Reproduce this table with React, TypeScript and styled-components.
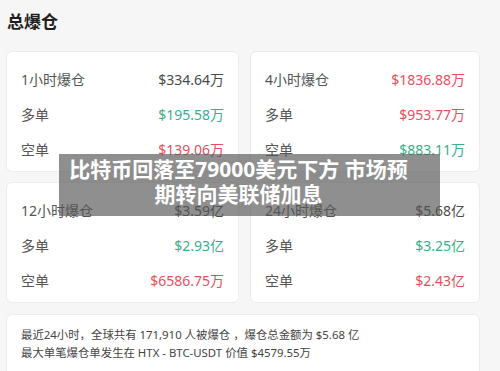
import styled, { createGlobalStyle } from 'styled-components'

type TTone = 'plain' | 'long' | 'short'

type TRow = {
  label: string,
  value: string,
  tone: TTone
}

type TCard = {
  id: string,
  rows: TRow[]
}

const cards: TCard[] = [
  {
    id: '1h',
    rows: [
      { label: '1小时爆仓', value: '$334.64万', tone: 'plain' },
      { label: '多单', value: '$195.58万', tone: 'long' },
      { label: '空单', value: '$139.06万', tone: 'short' }
    ]
  },
  {
    id: '4h',
    rows: [
      { label: '4小时爆仓', value: '$1836.88万', tone: 'short' },
      { label: '多单', value: '$953.77万', tone: 'short' },
      { label: '空单', value: '$883.11万', tone: 'long' }
    ]
  },
  {
    id: '12h',
    rows: [
      { label: '12小时爆仓', value: '$3.59亿', tone: 'plain' },
      { label: '多单', value: '$2.93亿', tone: 'long' },
      { label: '空单', value: '$6586.75万', tone: 'short' }
    ]
  },
  {
    id: '24h',
    rows: [
      { label: '24小时爆仓', value: '$5.68亿', tone: 'plain' },
      { label: '多单', value: '$3.25亿', tone: 'long' },
      { label: '空单', value: '$2.43亿', tone: 'short' }
    ]
  }
]

const toneColors: Record<TTone, string> = {
  plain: '#4a4a4a',
  long: '#3aae8c',
  short: '#e5505c'
}

export default function App() {
  return (
    <>
      <GlobalStyle />
      <Page>
        <Title>总爆仓</Title>
        <CardGrid>
          {cards.map(card =>
            <Card key={card.id}>
              {card.rows.map(row =>
                <Row key={row.label}>
                  <Label>{row.label}</Label>
                  <Value $tone={row.tone}>{row.value}</Value>
                </Row>
              )}
            </Card>
          )}
        </CardGrid>
        <SummaryCard>
          <SummaryLine>最近24小时，全球共有 171,910 人被爆仓 ，爆仓总金额为 $5.68 亿</SummaryLine>
          <SummaryLine>最大单笔爆仓单发生在 HTX - BTC-USDT 价值 $4579.55万</SummaryLine>
        </SummaryCard>
        <Headline>
          <HeadlineLine>比特币回落至79000美元下方 市场预</HeadlineLine>
          <HeadlineLine>期转向美联储加息</HeadlineLine>
        </Headline>
      </Page>
    </>
  )
}

const GlobalStyle = createGlobalStyle`
  html, body {
    margin: 0;
    padding: 0;
    background: #f6f6f6;
    font-family: "Noto Sans", "Noto Sans CJK SC", sans-serif;
  }
`

const Page = styled.div`
  position: relative;
  width: 500px;
  height: 371px;
  overflow: hidden;
  box-sizing: border-box;
  padding: 9px 20px 0 6px;
  background: #f6f6f6;
`

const Title = styled.h1`
  margin: 0 0 0 1px;
  height: 26px;
  line-height: 26px;
  font-size: 17px;
  font-weight: 700;
  color: #1f1f1f;
`

const CardGrid = styled.div`
  display: grid;
  grid-template-columns: 233px 230px;
  column-gap: 11px;
  row-gap: 10px;
  margin-top: 16px;
`

const Card = styled.div`
  display: flex;
  flex-direction: column;
  box-sizing: border-box;
  height: 121px;
  padding: 9px 14px 5px;
  background: #fff;
  border: 1px solid #ececec;
  border-radius: 6px;
`

const Row = styled.div`
  display: flex;
  justify-content: space-between;
  align-items: center;
  height: 35px;
`

const Label = styled.span`
  font-size: 14px;
  color: #555;
`

const Value = styled.span<{ $tone: TTone }>`
  font-size: 14px;
  color: ${p => toneColors[p.$tone]};
`

const SummaryCard = styled.div`
  box-sizing: border-box;
  width: 474px;
  margin-top: 11px;
  padding: 11px 14px 20px;
  background: #fff;
  border: 1px solid #ececec;
  border-radius: 6px;
`

const SummaryLine = styled.div`
  font-size: 11.4px;
  line-height: 18px;
  color: #444;
  white-space: nowrap;
`

const Headline = styled.div`
  position: absolute;
  left: 59px;
  top: 154px;
  width: 381px;
  height: 62px;
  box-sizing: border-box;
  padding: 3px 22px 0 0;
  display: flex;
  flex-direction: column;
  align-items: center;
  background: rgba(85, 85, 85, 0.66);
`

const HeadlineLine = styled.div`
  font-size: 21px;
  line-height: 25px;
  font-weight: 700;
  color: #fff;
  white-space: nowrap;
`
